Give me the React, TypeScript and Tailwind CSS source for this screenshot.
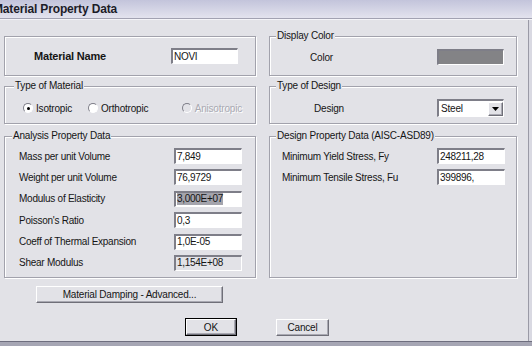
import React from "react";

const sunken =
  "border-t-2 border-l-2 border-b border-r border-t-[#7e7e88] border-l-[#7e7e88] border-b-white border-r-white";
const raised =
  "border border-t-white border-l-white border-b-[#6f6f78] border-r-[#6f6f78] shadow-[inset_-1px_-1px_0_#a9a9b2]";

function GroupBox({
  label,
  labelLeft = "left-[6px]",
  className = "",
  children,
}: {
  label?: string;
  labelLeft?: string;
  className?: string;
  children: React.ReactNode;
}) {
  return (
    <div
      className={`relative border border-[#a2a2ac] shadow-[inset_1px_1px_0_#ffffff,1px_1px_0_#ffffff] ${className}`}
    >
      {label && (
        <span
          className={`absolute -top-[7px] ${labelLeft} bg-[#e2e2e7] px-[1px] leading-[12px] tracking-[-0.2px]`}
        >
          {label}
        </span>
      )}
      {children}
    </div>
  );
}

function Field({
  value,
  w = "w-[68px]",
  disabled = false,
  selected = false,
}: {
  value: string;
  w?: string;
  disabled?: boolean;
  selected?: boolean;
}) {
  return (
    <div
      className={`${w} h-[16px] ${sunken} ${disabled ? "bg-[#e2e2e7]" : "bg-white"} flex items-center pl-[1px] leading-none tracking-[-0.3px]`}
    >
      <span className={selected ? "bg-[#a4a4ac] py-[1px]" : ""}>{value}</span>
    </div>
  );
}

function Radio({
  label,
  checked = false,
  disabled = false,
  w,
}: {
  label: string;
  checked?: boolean;
  disabled?: boolean;
  w: string;
}) {
  return (
    <div className={`${w} flex items-center gap-[3px]`}>
      <span
        className={`w-[10px] h-[10px] rounded-full border border-t-[#7e7e88] border-l-[#7e7e88] border-b-white border-r-white ${disabled ? "bg-[#e2e2e7]" : "bg-white"} flex items-center justify-center`}
      >
        {checked && <span className="w-[3px] h-[3px] rounded-full bg-black" />}
      </span>
      <span
        className={`tracking-[-0.2px] ${disabled ? "text-[#a9a9b2] [text-shadow:1px_1px_0_#ffffff]" : ""}`}
      >
        {label}
      </span>
    </div>
  );
}

function Row({ label, children, labelW }: { label: string; children: React.ReactNode; labelW: string }) {
  return (
    <div className="flex items-center h-[16px]">
      <span className={`${labelW} tracking-[-0.25px]`}>{label}</span>
      {children}
    </div>
  );
}

export default function App() {
  return (
    <div
      className="w-[532px] h-[346px] overflow-hidden flex flex-col bg-[#d9d9e2] text-[10px] text-[#151515]"
      style={{ fontFamily: '"Liberation Sans", Arial, sans-serif' }}
    >
      {/* title bar */}
      <div className="h-[18px] bg-gradient-to-b from-[#c3c4db] to-[#e3e3ee] flex items-center">
        <span className="ml-[-7px] text-[12px] font-bold text-[#1c1c28] tracking-[-0.15px]">
          Material Property Data
        </span>
      </div>
      <div className="h-[1px] bg-[#a2a2b2]" />
      <div className="h-[1px] bg-[#f4f4f8]" />

      {/* dialog body */}
      <div className="flex-1 w-[529px] bg-[#e2e2e7] border-r border-[#9a9aa6] flex flex-col">
        {/* row 1 */}
        <div className="mt-[16px] ml-[4px] flex gap-[13px] h-[40px]">
          <GroupBox className="w-[252px] flex items-center pl-[29px]">
            <span className="w-[137px] text-[11px] font-bold tracking-[-0.2px]">Material Name</span>
            <Field value="NOVI" w="w-[67px]" />
          </GroupBox>
          <GroupBox label="Display Color" className="w-[248px] flex items-center pl-[40px] pt-[2px]">
            <span className="w-[127px] tracking-[-0.2px]">Color</span>
            <div className={`w-[67px] h-[16px] ${sunken} bg-[#838386]`} />
          </GroupBox>
        </div>

        {/* row 2 */}
        <div className="mt-[10px] ml-[4px] flex gap-[13px] h-[38px]">
          <GroupBox
            label="Type of Material"
            labelLeft="left-[9px]"
            className="w-[252px] flex items-center pl-[18px] pt-[6px]"
          >
            <Radio label="Isotropic" checked w="w-[65px]" />
            <Radio label="Orthotropic" w="w-[94px]" />
            <Radio label="Anisotropic" disabled w="w-[60px]" />
          </GroupBox>
          <GroupBox label="Type of Design" className="w-[248px] flex items-center pl-[44px] pt-[6px]">
            <span className="w-[123px] tracking-[-0.2px]">Design</span>
            <div className={`w-[67px] h-[18px] ${sunken} bg-white flex items-center justify-between`}>
              <span className="pl-[2px] tracking-[-0.2px]">Steel</span>
              <div className={`w-[15px] h-[14px] bg-[#e2e2e7] ${raised} flex items-center justify-center`}>
                <svg width="7" height="4" viewBox="0 0 7 4">
                  <path d="M0 0h7L3.5 4z" fill="#000" />
                </svg>
              </div>
            </div>
          </GroupBox>
        </div>

        {/* row 3 */}
        <div className="mt-[12px] ml-[4px] flex gap-[13px] h-[142px]">
          <GroupBox
            label="Analysis Property Data"
            labelLeft="left-[7px]"
            className="w-[252px] flex flex-col gap-[5.4px] pt-[11px] pl-[14px]"
          >
            <Row label="Mass per unit Volume" labelW="w-[155px]">
              <Field value="7,849" />
            </Row>
            <Row label="Weight per unit Volume" labelW="w-[155px]">
              <Field value="76,9729" />
            </Row>
            <Row label="Modulus of Elasticity" labelW="w-[155px]">
              <Field value="3,000E+07" selected />
            </Row>
            <Row label="Poisson's Ratio" labelW="w-[155px]">
              <Field value="0,3" />
            </Row>
            <Row label="Coeff of Thermal Expansion" labelW="w-[155px]">
              <Field value="1,0E-05" />
            </Row>
            <Row label="Shear Modulus" labelW="w-[155px]">
              <Field value="1,154E+08" disabled />
            </Row>
          </GroupBox>
          <GroupBox
            label="Design Property Data (AISC-ASD89)"
            className="w-[248px] flex flex-col gap-[5.4px] pt-[11px] pl-[12px]"
          >
            <Row label="Minimum Yield Stress, Fy" labelW="w-[155px]">
              <Field value="248211,28" />
            </Row>
            <Row label="Minimum Tensile Stress, Fu" labelW="w-[155px]">
              <Field value="399896," />
            </Row>
          </GroupBox>
        </div>

        {/* damping */}
        <div className="mt-[8px] ml-[36px]">
          <button
            className={`w-[187px] h-[17px] bg-[#e2e2e7] ${raised} flex items-center justify-center tracking-[-0.2px]`}
          >
            Material Damping - Advanced...
          </button>
        </div>

        {/* ok / cancel */}
        <div className="mt-[15px] ml-[185px] flex items-center gap-[39px]">
          <button className="w-[52px] h-[18px] border border-black bg-[#e2e2e7] p-0">
            <span className={`w-full h-full ${raised} flex items-center justify-center`}>OK</span>
          </button>
          <button
            className={`w-[53px] h-[17px] bg-[#e2e2e7] ${raised} flex items-center justify-center tracking-[-0.2px]`}
          >
            Cancel
          </button>
        </div>
      </div>

      {/* bottom edge */}
      <div className="h-[1px] bg-[#6e6e7e]" />
      <div className="h-[4px] bg-[#a6a6b4]" />
    </div>
  );
}
